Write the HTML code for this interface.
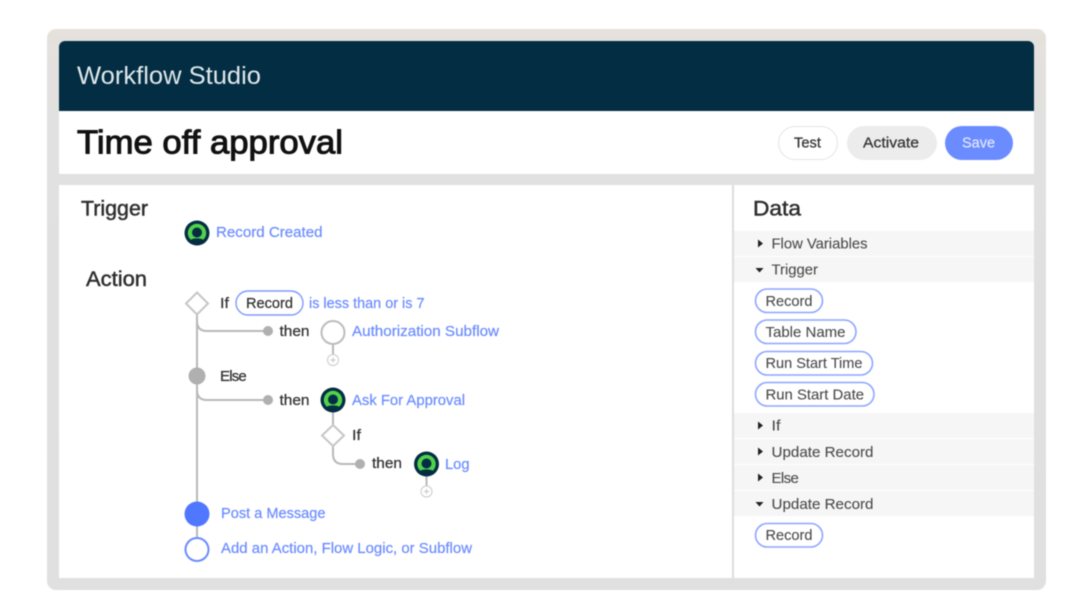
<!DOCTYPE html>
<html>
<head>
<meta charset="utf-8">
<style>
html,body{margin:0;padding:0;background:#fff;width:1080px;height:613px;overflow:hidden}
svg{display:block;font-family:"Liberation Sans",sans-serif;filter:blur(.45px)}
.b{fill:#6b8cff;font-size:15px;stroke:#6b8cff;stroke-width:.2px}
.k{fill:#333;font-size:15px;stroke:#333;stroke-width:.25px}
.d{fill:#4a4a4a;font-size:15px;stroke:#4a4a4a;stroke-width:.1px}
.h{fill:#2e2e2e;font-size:21px;stroke:#2e2e2e;stroke-width:.45px}
.p{fill:#fff;stroke:#8ea6ff;stroke-width:1.6px}
.l{fill:none;stroke:#b8b8b8;stroke-width:2px}
.n{fill:#b0b0b0}
.r{fill:#f6f6f7}
</style>
</head>
<body>
<svg width="1080" height="613" viewBox="0 0 1080 613" xmlns="http://www.w3.org/2000/svg">
<defs>
<linearGradient id="card" x1="0" y1="0" x2="0" y2="1">
<stop offset="0" stop-color="#e5e1dd"/>
<stop offset=".16" stop-color="#e1e1e1"/>
<stop offset="1" stop-color="#e0e0e0"/>
</linearGradient>
<g id="g">
<circle r="12.5" fill="#032d42"/>
<circle r="9.2" fill="#52d14c"/>
<circle r="5" cy="-.5" fill="#032d42"/>
<path d="M-6.5 7 A9.5 9.5 0 0 0 6.5 7 A8 4 0 0 0 -6.5 7Z" fill="#032d42"/>
</g>
<g id="plus">
<circle r="5.5" fill="#fff" stroke="#d2d2d2" stroke-width="1.2"/>
<path d="M-2.5 0H2.5M0 -2.5V2.5" stroke="#c4c4c4" stroke-width="1"/>
</g>
</defs>

<rect x="47" y="29" width="999" height="561" rx="9" fill="url(#card)"/>
<path d="M59 111V47a6 6 0 0 1 6-6H1028a6 6 0 0 1 6 6V111Z" fill="#032d42"/>
<rect x="59" y="111" width="975" height="63" fill="#fff"/>
<rect x="59" y="185" width="975" height="393" fill="#fff"/>
<rect x="732" y="185" width="2" height="393" fill="#dcdcdc"/>

<text x="77" y="84" font-size="25" fill="#dfe8eb" textLength="184" lengthAdjust="spacingAndGlyphs">Workflow Studio</text>
<text x="77" y="153.500" font-size="33" fill="#111" stroke="#111" stroke-width="1" textLength="266" lengthAdjust="spacingAndGlyphs">Time off approval</text>

<rect x="778.500" y="126.500" width="59" height="33" rx="16.500" fill="#fff" stroke="#e4e4e4"/>
<text x="794" y="147.500" class="k" textLength="27" lengthAdjust="spacingAndGlyphs">Test</text>
<rect x="847" y="126" width="90" height="34" rx="17" fill="#ececec"/>
<text x="863" y="147.500" class="k" textLength="56" lengthAdjust="spacingAndGlyphs">Activate</text>
<rect x="945" y="126" width="68" height="34" rx="17" fill="#6b8cff"/>
<text x="962" y="147.500" font-size="15" fill="#dfe6ff" stroke="#dfe6ff" stroke-width=".2" textLength="33" lengthAdjust="spacingAndGlyphs">Save</text>

<text x="81" y="215.500" class="h" textLength="67" lengthAdjust="spacingAndGlyphs">Trigger</text>
<text x="86" y="286" class="h" textLength="61" lengthAdjust="spacingAndGlyphs">Action</text>
<text x="753" y="215.500" class="h" textLength="48" lengthAdjust="spacingAndGlyphs">Data</text>

<path class="l" d="M197 314V540"/>
<path class="l" d="M197 321Q197 331 207 331H268"/>
<path class="l" d="M197 390Q197 400 207 400H268"/>
<path class="l" d="M333 340V360"/>
<path class="l" d="M333 410V425M333 445V454Q333 464 343 464H360"/>
<path class="l" d="M426.500 472V486"/>

<use href="#g" x="197" y="233"/>
<text x="216" y="237" class="b" textLength="106.500" lengthAdjust="spacingAndGlyphs">Record Created</text>

<path d="M197 292.500L208 303.500L197 314.500L186 303.500Z" fill="#fff" stroke="#c6c6c6" stroke-width="2"/>
<text x="220" y="308" class="k" textLength="9" lengthAdjust="spacingAndGlyphs">If</text>
<rect x="236" y="291" width="67" height="24" rx="12" fill="#fff" stroke="#7f9bff" stroke-width="1.400"/>
<text x="246" y="308" class="k" textLength="47" lengthAdjust="spacingAndGlyphs">Record</text>
<text x="309" y="308" class="b" textLength="115.500" lengthAdjust="spacingAndGlyphs">is less than or is 7</text>

<circle cx="268" cy="331" r="5" class="n"/>
<text x="279.500" y="336" class="k" textLength="30" lengthAdjust="spacingAndGlyphs">then</text>
<circle cx="333" cy="332.500" r="11.500" fill="#fff" stroke="#bdbdbd" stroke-width="2"/>
<text x="352" y="336" class="b" textLength="147" lengthAdjust="spacingAndGlyphs">Authorization Subflow</text>
<use href="#plus" x="333" y="360"/>

<circle cx="197" cy="376" r="8.500" class="n"/>
<text x="220" y="381" class="k" letter-spacing="-.8">Else</text>

<circle cx="268" cy="400" r="5" class="n"/>
<text x="279.500" y="405" class="k" textLength="30" lengthAdjust="spacingAndGlyphs">then</text>
<use href="#g" x="333" y="400"/>
<text x="352" y="405" class="b" textLength="113" lengthAdjust="spacingAndGlyphs">Ask For Approval</text>

<path d="M333 425L344 435.500L333 446L322 435.500Z" fill="#fff" stroke="#c6c6c6" stroke-width="2"/>
<text x="352" y="440" class="k" textLength="9" lengthAdjust="spacingAndGlyphs">If</text>

<circle cx="360" cy="464" r="5" class="n"/>
<text x="372" y="468" class="k" textLength="30" lengthAdjust="spacingAndGlyphs">then</text>
<use href="#g" x="426.500" y="464"/>
<text x="445" y="469" class="b" textLength="24.500" lengthAdjust="spacingAndGlyphs">Log</text>
<use href="#plus" x="426.500" y="491.500"/>

<circle cx="197" cy="514" r="12.500" fill="#5077ff"/>
<text x="221" y="518" class="b" textLength="104.500" lengthAdjust="spacingAndGlyphs">Post a Message</text>
<circle cx="197" cy="549.500" r="11.500" fill="#fff" stroke="#6b8cff" stroke-width="2"/>
<text x="221" y="553" class="b" textLength="251" lengthAdjust="spacingAndGlyphs">Add an Action, Flow Logic, or Subflow</text>

<rect class="r" x="734" y="231" width="300" height="25"/>
<rect class="r" x="734" y="257" width="300" height="25"/>
<rect class="r" x="734" y="413" width="300" height="25"/>
<rect class="r" x="734" y="439" width="300" height="25"/>
<rect class="r" x="734" y="465" width="300" height="25"/>
<rect class="r" x="734" y="491" width="300" height="25"/>

<path d="M758 239.500L763 243.500L758 247.500Z" fill="#222"/>
<text x="771.500" y="248.500" class="d" textLength="96" lengthAdjust="spacingAndGlyphs">Flow Variables</text>
<path d="M755.500 268L763.500 268L759.500 272.500Z" fill="#222"/>
<text x="771.500" y="274.500" class="d" textLength="46.500" lengthAdjust="spacingAndGlyphs">Trigger</text>

<rect class="p" x="755.500" y="289" width="67" height="23.500" rx="11.750"/>
<text x="765.500" y="306" class="d" textLength="47" lengthAdjust="spacingAndGlyphs">Record</text>
<rect class="p" x="755.500" y="320" width="100.500" height="23.500" rx="11.750"/>
<text x="765.500" y="337" class="d" textLength="80" lengthAdjust="spacingAndGlyphs">Table Name</text>
<rect class="p" x="755.500" y="351.500" width="117" height="23.500" rx="11.750"/>
<text x="765.500" y="368" class="d" textLength="97" lengthAdjust="spacingAndGlyphs">Run Start Time</text>
<rect class="p" x="755.500" y="382.500" width="118.500" height="23.500" rx="11.750"/>
<text x="765.500" y="399.500" class="d" textLength="98.500" lengthAdjust="spacingAndGlyphs">Run Start Date</text>

<path d="M758 421.500L763 425.500L758 429.500Z" fill="#222"/>
<text x="771.500" y="430.500" class="d" textLength="9" lengthAdjust="spacingAndGlyphs">If</text>
<path d="M758 447.500L763 451.500L758 455.500Z" fill="#222"/>
<text x="771.500" y="457" class="d" textLength="102" lengthAdjust="spacingAndGlyphs">Update Record</text>
<path d="M758 473.500L763 477.500L758 481.500Z" fill="#222"/>
<text x="771.500" y="483" class="d" letter-spacing="-.6">Else</text>
<path d="M755.500 502L763.500 502L759.500 506.500Z" fill="#222"/>
<text x="771.500" y="509" class="d" textLength="102" lengthAdjust="spacingAndGlyphs">Update Record</text>

<rect class="p" x="755.500" y="523.500" width="67" height="23.500" rx="11.750"/>
<text x="765.500" y="540" class="d" textLength="47" lengthAdjust="spacingAndGlyphs">Record</text>
</svg>
</body>
</html>
